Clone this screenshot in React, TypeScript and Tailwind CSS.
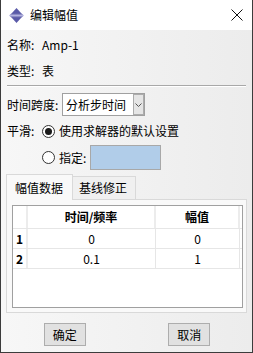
import React from "react";

const font = { fontFamily: '"Noto Sans CJK SC", "Microsoft YaHei", sans-serif' };

function AppIcon() {
  return (
    <svg width="15" height="15" viewBox="0 0 15 15">
      <defs>
        <linearGradient id="ig" x1="0" y1="0" x2="0" y2="1">
          <stop offset="0" stopColor="#4f4f9e" />
          <stop offset="0.5" stopColor="#b4b4e0" />
          <stop offset="1" stopColor="#4f4f9e" />
        </linearGradient>
      </defs>
      <path d="M7.5 0 L12 5 L3 5 Z" fill="#5a5aa8" />
      <path d="M7.5 15 L12 10 L3 10 Z" fill="#5a5aa8" />
      <path d="M0 7.5 L3 5 L12 5 L15 7.5 L12 10 L3 10 Z" fill="url(#ig)" />
    </svg>
  );
}

function Radio({ checked }: { checked?: boolean }) {
  return (
    <span className="w-[13px] h-[13px] rounded-full border border-[#333] bg-white flex items-center justify-center shrink-0">
      {checked && <span className="w-[7px] h-[7px] rounded-full bg-[#1a1a1a]" />}
    </span>
  );
}

const rows = [
  { n: "1", t: "0", v: "0" },
  { n: "2", t: "0.1", v: "1" },
];

export default function App() {
  return (
    <div
      style={font}
      className="w-[253px] h-[353px] border-x border-b border-[#3c3c3c] flex flex-col text-[12px] leading-[16px] text-black bg-gradient-to-r from-[#f7f7f7] to-[#ececec]"
    >
      {/* title bar */}
      <div className="h-[30px] bg-white flex items-center pl-[8px] pr-[8px] shrink-0">
        <AppIcon />
        <span className="ml-[6px]">编辑幅值</span>
        <svg className="ml-auto mr-[1px]" width="12" height="12" viewBox="0 0 12 12">
          <path d="M0.5 0.5 L11.5 11.5 M11.5 0.5 L0.5 11.5" stroke="#111" strokeWidth="1" />
        </svg>
      </div>

      <div className="px-[6px] flex flex-col">
        <div className="mt-[7px] h-[16px] flex items-center">
          <span className="w-[35px]">名称:</span>
          <span>Amp-1</span>
        </div>
        <div className="mt-[10px] h-[16px] flex items-center">
          <span className="w-[35px]">类型:</span>
          <span>表</span>
        </div>
        <div className="mt-[6px] border-t border-[#a8a8a8] border-b border-b-white" />

        <div className="mt-[6px] h-[23px] flex items-center">
          <span className="w-[55px]">时间跨度:</span>
          <div className="w-[83px] h-[23px] border border-[#a0a0a0] bg-white flex items-center">
            <span className="pl-[3px] flex-1">分析步时间</span>
            <div className="w-[11px] h-[21px] bg-[#e5e5e5] border border-[#acacac] flex items-center justify-center">
              <svg width="7" height="4" viewBox="0 0 7 4">
                <path d="M0.5 0.5 L3.5 3.5 L6.5 0.5" stroke="#555" fill="none" strokeWidth="1" />
              </svg>
            </div>
          </div>
        </div>

        <div className="mt-[7px] h-[16px] flex items-center">
          <span className="w-[35px]">平滑:</span>
          <Radio checked />
          <span className="ml-[4px]">使用求解器的默认设置</span>
        </div>

        <div className="mt-[6px] h-[25px] flex items-center pl-[35px]">
          <Radio />
          <span className="ml-[4px] w-[31px]">指定:</span>
          <div className="w-[71px] h-[25px] bg-[#b1cde9] border border-[#a8a8a8]" />
        </div>

        {/* tabs */}
        <div className="mt-[4px] flex items-end -ml-[1px] h-[25px] relative z-10">
          <div className="w-[67px] h-[26px] border border-b-0 border-[#d9d9d9] bg-[#f9f9f9] flex items-center pl-[8px] -mb-[1px]">
            幅值数据
          </div>
          <div className="w-[63px] h-[23px] border border-l-0 border-b-0 border-[#d9d9d9] bg-[#f0f0f0] flex items-center pl-[6px]">
            基线修正
          </div>
        </div>
        <div className="-ml-[1px] w-[241px] h-[114px] border border-[#d9d9d9] bg-[#f9f9f9] pt-[5px] pl-[5px] pr-[3px] pb-[4px]">
          <div className="w-full h-full border border-[#a0a0a0] bg-white">
            <div className="flex h-[23px] border-b border-[#e6e6e6] font-bold">
              <div className="w-[15px] border-r-2 border-[#ececec]" />
              <div className="w-[128px] border-r-2 border-[#ececec] flex items-center justify-center">时间/频率</div>
              <div className="w-[84px] border-r-2 border-[#ececec] flex items-center justify-center">幅值</div>
            </div>
            {rows.map((r) => (
              <div key={r.n} className="flex h-[20px] border-b border-[#e6e6e6]">
                <div className="w-[15px] border-r-2 border-[#ececec] flex items-center justify-center font-bold">{r.n}</div>
                <div className="w-[128px] border-r border-[#e6e6e6] flex items-center justify-center">{r.t}</div>
                <div className="w-[84px] border-r border-[#e6e6e6] flex items-center justify-center">{r.v}</div>
              </div>
            ))}
          </div>
        </div>
      </div>

      {/* buttons */}
      <div className="mt-[10px] flex">
        <div className="flex-1 flex justify-center">
          <button className="w-[42px] h-[23px] bg-[#e1e1e1] border border-[#adadad] flex items-center justify-center ml-[2px]">确定</button>
        </div>
        <div className="flex-1 flex justify-center">
          <button className="w-[42px] h-[23px] bg-[#e1e1e1] border border-[#adadad] flex items-center justify-center">取消</button>
        </div>
      </div>
    </div>
  );
}
